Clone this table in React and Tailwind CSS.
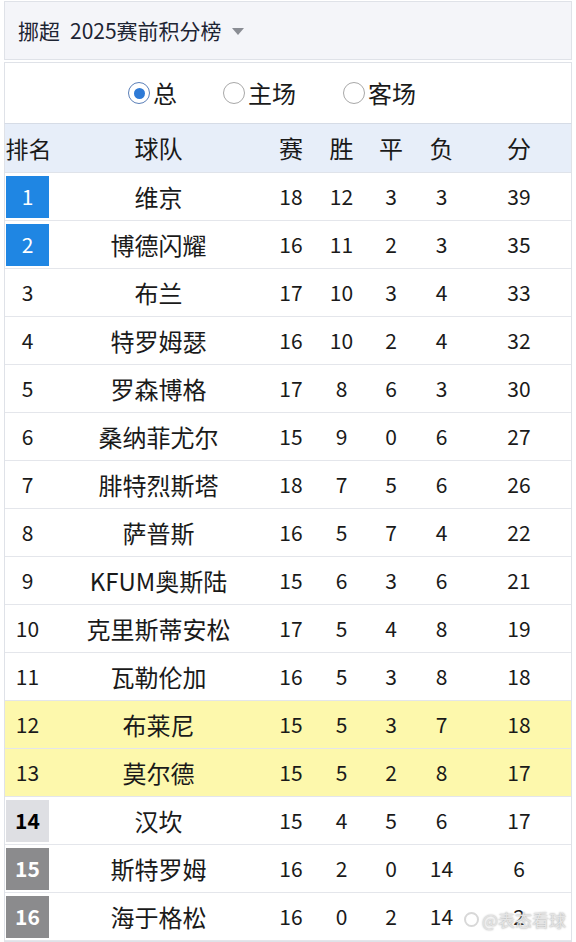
import React from 'react'

const rows = [
  [1, '维京', 18, 12, 3, 3, 39],
  [2, '博德闪耀', 16, 11, 2, 3, 35],
  [3, '布兰', 17, 10, 3, 4, 33],
  [4, '特罗姆瑟', 16, 10, 2, 4, 32],
  [5, '罗森博格', 17, 8, 6, 3, 30],
  [6, '桑纳菲尤尔', 15, 9, 0, 6, 27],
  [7, '腓特烈斯塔', 18, 7, 5, 6, 26],
  [8, '萨普斯', 16, 5, 7, 4, 22],
  [9, 'KFUM奥斯陆', 15, 6, 3, 6, 21],
  [10, '克里斯蒂安松', 17, 5, 4, 8, 19],
  [11, '瓦勒伦加', 16, 5, 3, 8, 18],
  [12, '布莱尼', 15, 5, 3, 7, 18],
  [13, '莫尔德', 15, 5, 2, 8, 17],
  [14, '汉坎', 15, 4, 5, 6, 17],
  [15, '斯特罗姆', 16, 2, 0, 14, 6],
  [16, '海于格松', 16, 0, 2, 14, 2],
]

const cols = 'grid grid-cols-[47px_213px_52px_49px_50px_51px_1fr] items-center'

const RankCell = ({ rank }) => {
  if (rank <= 2)
    return (
      <div className="w-[43px] h-[42px] ml-[1px] bg-[#1f86e3] text-white text-[21px] flex items-center justify-center">
        {rank}
      </div>
    )
  if (rank === 14)
    return (
      <div className="w-[43px] h-[42px] ml-[1px] bg-[#dedfe3] text-black font-bold text-[21px] flex items-center justify-center">
        {rank}
      </div>
    )
  if (rank >= 15)
    return (
      <div className="w-[43px] h-[42px] ml-[1px] bg-[#8b8b8d] text-white font-bold text-[21px] flex items-center justify-center">
        {rank}
      </div>
    )
  return <div className="text-center text-[21px] pr-[2px]">{rank}</div>
}

const Radio = ({ checked, label }) => (
  <div className="flex items-center">
    <span
      className={
        'w-[22px] h-[22px] rounded-full border flex items-center justify-center bg-white ' +
        (checked ? 'border-[#5b7fb8]' : 'border-[#a8a8a8]')
      }
    >
      {checked && <span className="w-[11px] h-[11px] rounded-full bg-[#2e7ad6]" />}
    </span>
    <span className="text-[24px] text-[#1a1a1a] leading-none ml-[3px]">{label}</span>
  </div>
)

export default function App() {
  return (
    <div
      className="w-[576px] h-[942px] bg-white px-[4px] overflow-hidden relative"
      style={{ fontFamily: '"Noto Sans CJK SC", "Noto Sans", sans-serif' }}
    >
      <div className="mt-[1px] h-[59px] border border-[#dfe2e8] bg-[#f4f5f9] flex items-center pl-[13px] text-[#1d2433]">
        <span className="text-[21px]">挪超</span>
        <span className="text-[21px] ml-[10px]">2025赛前积分榜</span>
        <span className="ml-[10px] mt-[2px] w-0 h-0 border-l-[6px] border-r-[6px] border-t-[7px] border-l-transparent border-r-transparent border-t-[#8a8d94]" />
      </div>

      <div className="mt-[2px] h-[61px] border border-[#dfe2e8] border-b-0 bg-white flex items-center pl-[123px]">
        <Radio checked label="总" />
        <div className="ml-[46px]"><Radio label="主场" /></div>
        <div className="ml-[47px]"><Radio label="客场" /></div>
      </div>

      <div className="border border-[#dfe2e8] border-t-[#d6dce6] text-[#1a1a1a]">
        <div className={cols + ' h-[49px] bg-[#e7eef9] border-b border-[#dfe3ea] text-[24px] leading-none'}>
          <div className="whitespace-nowrap text-[23px] flex justify-center">排名</div>
          <div className="text-center">球队</div>
          <div className="text-center">赛</div>
          <div className="text-center">胜</div>
          <div className="text-center">平</div>
          <div className="text-center">负</div>
          <div className="text-center">分</div>
        </div>
        {rows.map(([rank, team, p, w, d, l, pts]) => (
          <div
            key={rank}
            className={
              cols +
              ' h-[48px] border-b border-[#e4e6eb] text-[21px] ' +
              (rank === 12 || rank === 13 ? 'bg-[#fdf8ac]' : 'bg-white')
            }
          >
            <RankCell rank={rank} />
            <div className="text-center text-[24px] leading-none">{team}</div>
            <div className="text-center">{p}</div>
            <div className="text-center">{w}</div>
            <div className="text-center">{d}</div>
            <div className="text-center">{l}</div>
            <div className="text-center">{pts}</div>
          </div>
        ))}
      </div>

      <div className="absolute right-[10px] bottom-[10px] flex items-center gap-[3px] text-[17px] text-[#e4e4e4] [text-shadow:0_0_2px_#9a9a9a]">
        <span className="w-[15px] h-[15px] rounded-full border-2 border-[#d8d8d8]" />
        <span>@表态看球</span>
      </div>
    </div>
  )
}
